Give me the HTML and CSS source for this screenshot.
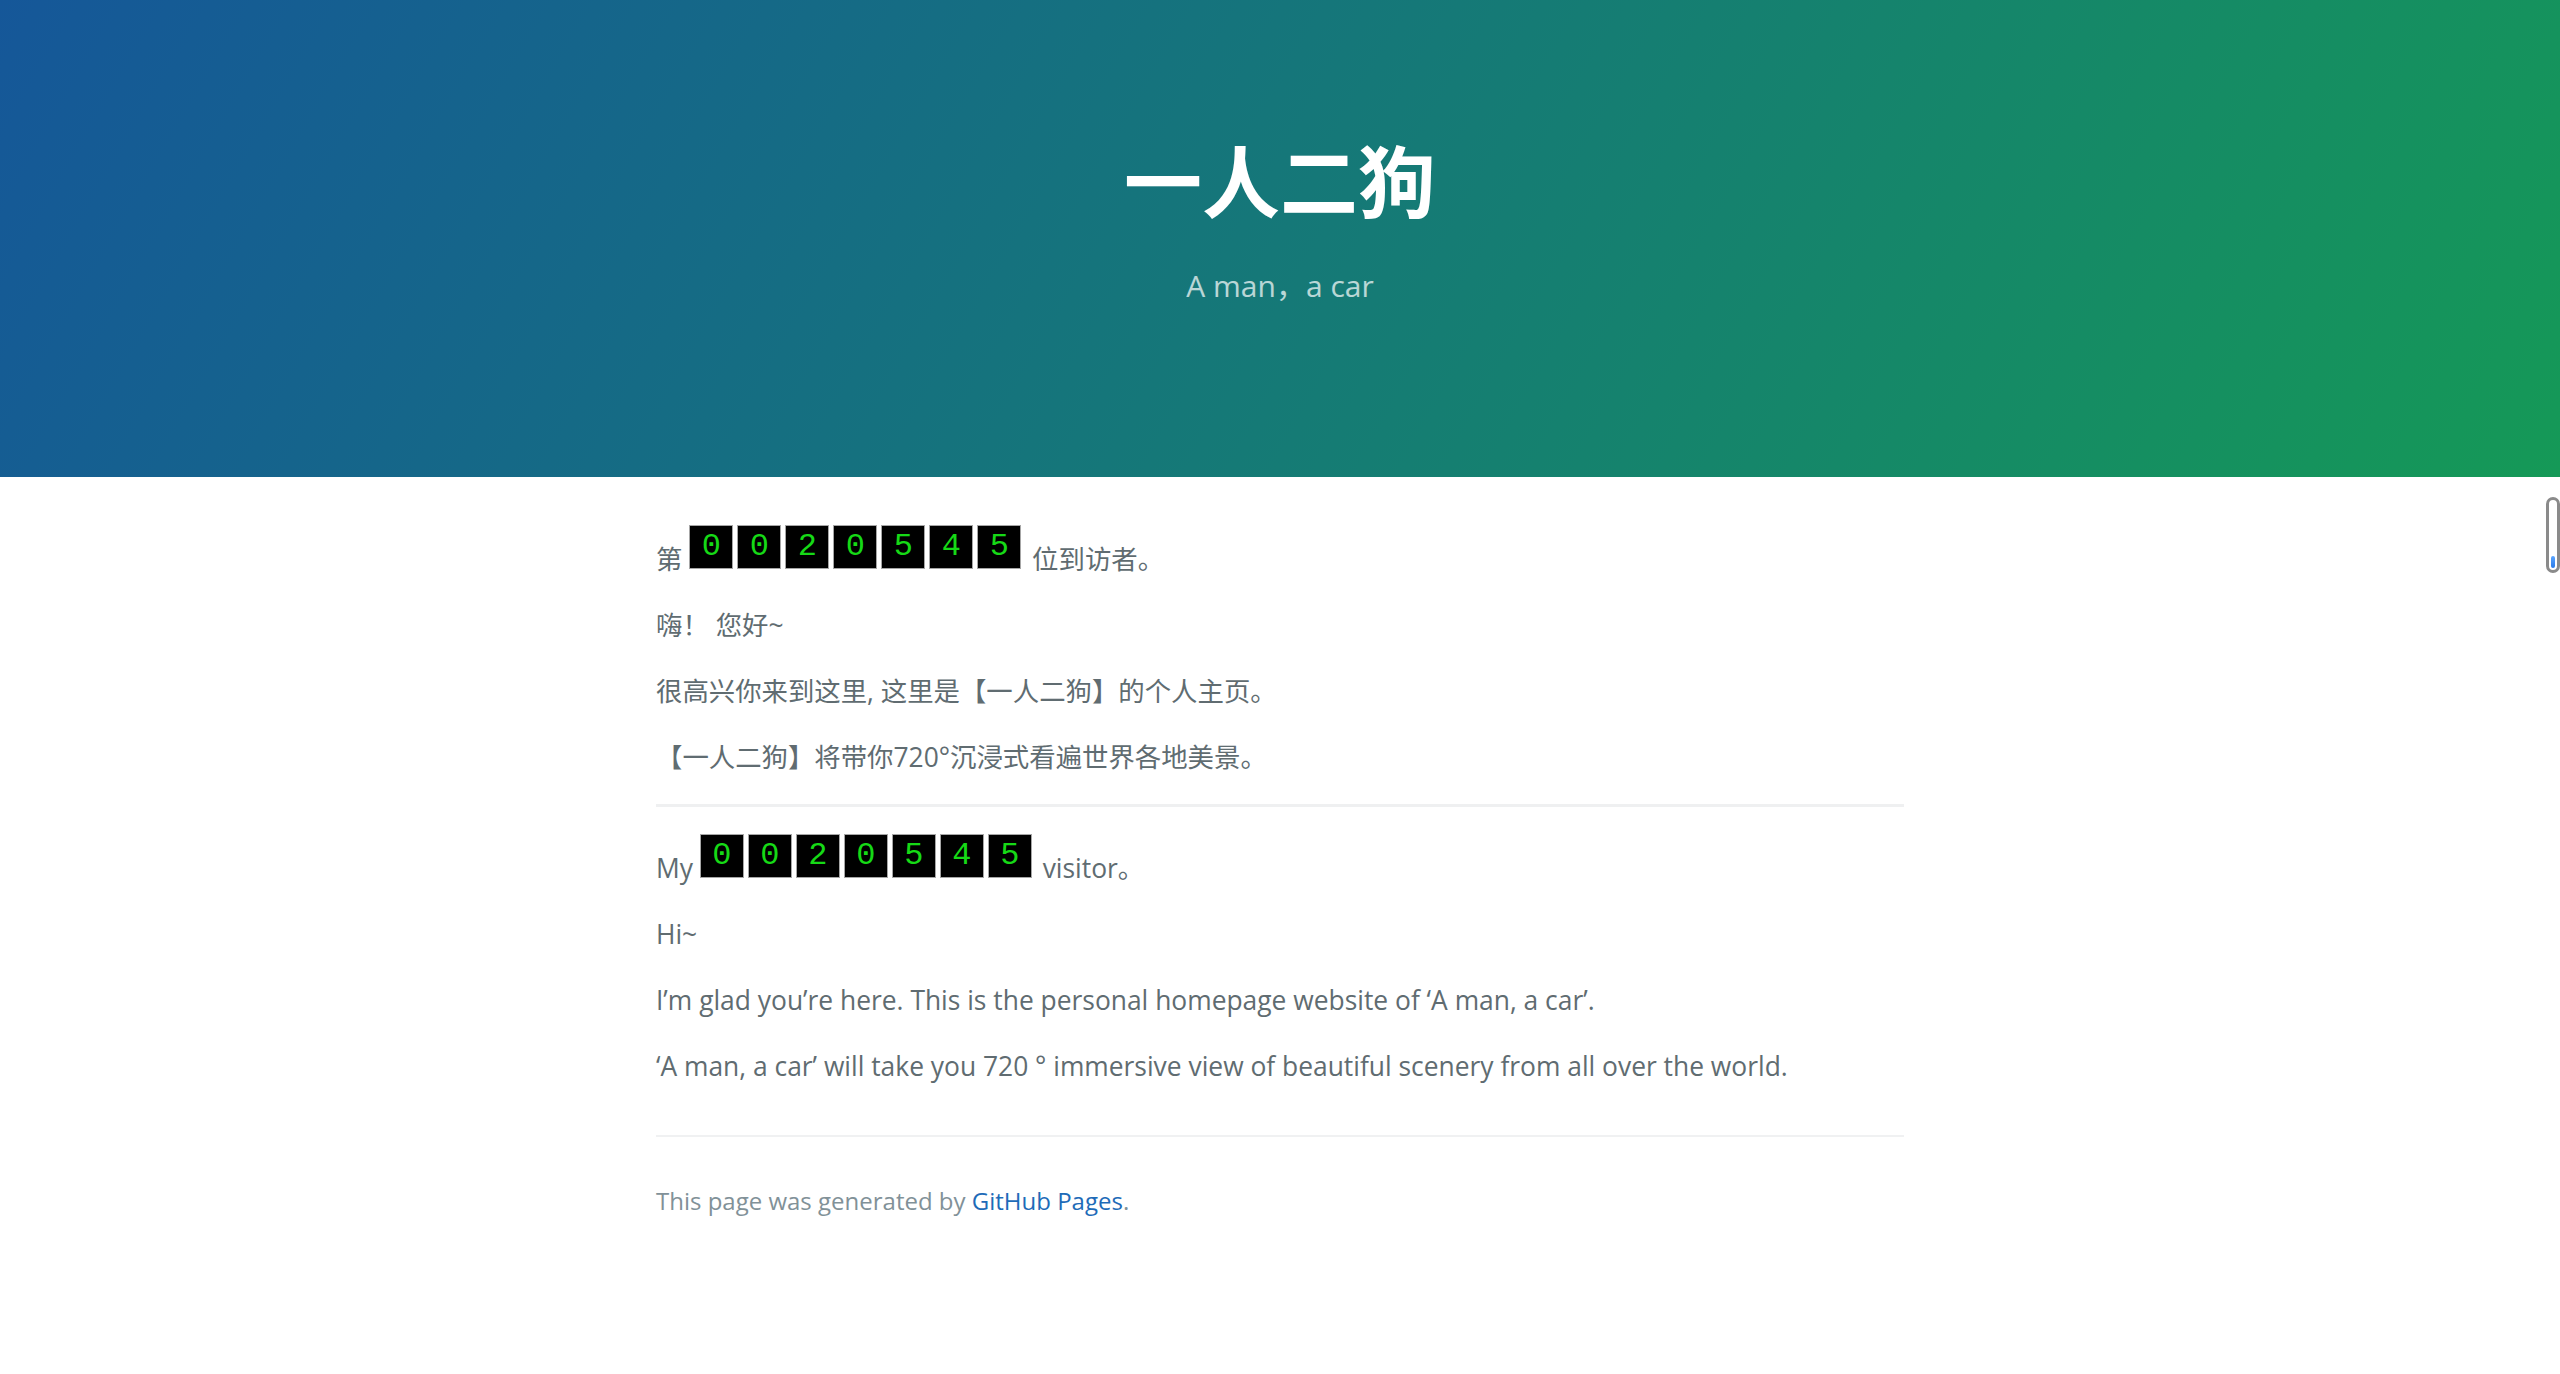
FILE: index.html
```html
<!DOCTYPE html>
<html lang="zh-CN">
<head>
<meta charset="utf-8">
<title>一人二狗</title>
<link rel="stylesheet" href="styles.css">
</head>
<body>
<header class="page-header">
  <h1 class="project-name">一人二狗</h1>
  <h2 class="project-tagline">A man，a car</h2>
</header>
<main class="main-content">
  <p>第 <span class="digit">0</span><span class="digit">0</span><span class="digit">2</span><span class="digit">0</span><span class="digit">5</span><span class="digit">4</span><span class="digit">5</span> 位到访者。</p>
  <p>嗨！ 您好~</p>
  <p>很高兴你来到这里, 这里是【一人二狗】的个人主页。</p>
  <p>【一人二狗】将带你720°沉浸式看遍世界各地美景。</p>
  <hr class="divider">
  <p>My <span class="digit">0</span><span class="digit">0</span><span class="digit">2</span><span class="digit">0</span><span class="digit">5</span><span class="digit">4</span><span class="digit">5</span> visitor。</p>
  <p>Hi~</p>
  <p>I’m glad you’re here. This is the personal homepage website of ‘A man, a car’.</p>
  <p>‘A man, a car’ will take you 720 ° immersive view of beautiful scenery from all over the world.</p>
  <footer class="site-footer">
    <span class="site-footer-credits">This page was generated by <a class="footer-link" href="#">GitHub Pages</a>.</span>
  </footer>
</main>
<div class="thermo"><div class="thermo-fill"></div></div>
</body>
</html>
```
FILE: styles.css
```css
html, body {
  margin: 0;
  padding: 0;
  background: #fff;
}

body {
  font-family: "Open Sans", "Noto Sans CJK SC", "Liberation Sans", sans-serif;
  color: #606c71;
  line-height: 1.5;
}

.page-header {
  color: #fff;
  text-align: center;
  background-color: #159957;
  background-image: linear-gradient(120deg, #155799, #159957);
  padding: 120px 144px;
}

.project-name {
  font-family: "Noto Sans CJK SC", "Open Sans", sans-serif;
  font-size: 78px;
  font-weight: 700;
  line-height: 1.5;
  margin: 0 0 2.4px;
}

.project-tagline {
  font-size: 30px;
  font-weight: normal;
  line-height: 1.5;
  opacity: 0.7;
  margin: 26px 0 49px;
}

.main-content {
  max-width: 1536px;
  box-sizing: border-box;
  padding: 48px 144px;
  margin: 0 auto;
  font-size: 26.4px;
  word-wrap: break-word;
}

.main-content p {
  margin: 0 0 26.4px;
}

.divider {
  height: 3px;
  padding: 0;
  margin: 24px 0 27px;
  background-color: #eff0f1;
  border: 0;
}

.digit {
  display: inline-block;
  overflow: hidden;
  box-sizing: border-box;
  width: 44px;
  height: 44px;
  margin-right: 4px;
  background: #000;
  border: 1px solid #a6a6a6;
  color: #16d916;
  font-family: "Liberation Mono", monospace;
  font-size: 32px;
  line-height: 42px;
  text-align: center;
}

.site-footer {
  margin-top: 48px;
  padding-top: 46px;
  border-top: 2px solid #f0f1f2;
  font-size: 24px;
}

.site-footer-credits {
  color: #819198;
}

.footer-link {
  color: #1e6bb8;
  text-decoration: none;
}

.thermo {
  position: fixed;
  left: 2546px;
  top: 497px;
  width: 14px;
  height: 76px;
  box-sizing: border-box;
  border: 3px solid #8a8a8a;
  border-radius: 8px;
  background: #fff;
}

.thermo-fill {
  position: absolute;
  left: 2px;
  right: 2px;
  bottom: 2px;
  height: 12px;
  border-radius: 3px;
  background: linear-gradient(#5aa5ff, #2a7be8);
}
```
